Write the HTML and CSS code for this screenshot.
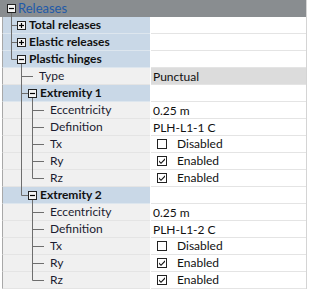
FILE: index.html
```html
<!DOCTYPE html>
<html>
<head>
<meta charset="utf-8">
<link rel="stylesheet" href="styles.css">
</head>
<body>
<div class="grid">
  <div class="row head">
    <svg class="tree" width="18" height="17" viewBox="0 0 18 17">
      <line x1="11.5" y1="12" x2="11.5" y2="17" class="ln"/>
      <rect x="7.5" y="4.5" width="8" height="8" class="bx"/>
      <line x1="9" y1="8.5" x2="14" y2="8.5" class="sg"/>
    </svg>
    <span class="title">Releases</span>
  </div>

  <div class="row cat">
    <div class="name">
      <svg class="tree" width="26" height="17" viewBox="3 0 26 17">
        <line x1="11.5" y1="0" x2="11.5" y2="17" class="ln"/>
        <line x1="11.5" y1="8.5" x2="17.5" y2="8.5" class="ln"/>
        <rect x="17.5" y="4.5" width="8" height="8" class="bx"/>
        <line x1="19" y1="8.5" x2="24" y2="8.5" class="sg"/>
        <line x1="21.5" y1="6" x2="21.5" y2="11" class="sg"/>
      </svg>
      <span class="lbl b">Total releases</span>
    </div>
    <div class="val"></div>
  </div>

  <div class="row cat">
    <div class="name">
      <svg class="tree" width="26" height="17" viewBox="3 0 26 17">
        <line x1="11.5" y1="0" x2="11.5" y2="17" class="ln"/>
        <line x1="11.5" y1="8.5" x2="17.5" y2="8.5" class="ln"/>
        <rect x="17.5" y="4.5" width="8" height="8" class="bx"/>
        <line x1="19" y1="8.5" x2="24" y2="8.5" class="sg"/>
        <line x1="21.5" y1="6" x2="21.5" y2="11" class="sg"/>
      </svg>
      <span class="lbl b">Elastic releases</span>
    </div>
    <div class="val"></div>
  </div>

  <div class="row cat">
    <div class="name">
      <svg class="tree" width="26" height="17" viewBox="3 0 26 17">
        <line x1="11.5" y1="0" x2="11.5" y2="8.5" class="ln"/>
        <line x1="11.5" y1="8.5" x2="17.5" y2="8.5" class="ln"/>
        <line x1="21.5" y1="12" x2="21.5" y2="17" class="ln"/>
        <rect x="17.5" y="4.5" width="8" height="8" class="bx"/>
        <line x1="19" y1="8.5" x2="24" y2="8.5" class="sg"/>
      </svg>
      <span class="lbl b">Plastic hinges</span>
    </div>
    <div class="val"></div>
  </div>

  <div class="row prop">
    <div class="name">
      <svg class="tree" width="36" height="17" viewBox="3 0 36 17">
        <line x1="21.5" y1="0" x2="21.5" y2="17" class="ln"/>
        <line x1="21.5" y1="8.5" x2="33" y2="8.5" class="ln"/>
      </svg>
      <span class="lbl">Type</span>
    </div>
    <div class="val sel">Punctual</div>
  </div>

  <div class="row cat">
    <div class="name">
      <svg class="tree" width="37" height="17" viewBox="3 0 37 17">
        <line x1="21.5" y1="0" x2="21.5" y2="17" class="ln"/>
        <line x1="21.5" y1="8.5" x2="28.5" y2="8.5" class="ln"/>
        <line x1="32.5" y1="12" x2="32.5" y2="17" class="ln"/>
        <rect x="28.5" y="4.5" width="8" height="8" class="bx"/>
        <line x1="30" y1="8.5" x2="35" y2="8.5" class="sg"/>
      </svg>
      <span class="lbl b">Extremity 1</span>
    </div>
    <div class="val"></div>
  </div>

  <div class="row prop">
    <div class="name">
      <svg class="tree" width="47" height="17" viewBox="3 0 47 17">
        <line x1="21.5" y1="0" x2="21.5" y2="17" class="ln"/>
        <line x1="32.5" y1="0" x2="32.5" y2="17" class="ln"/>
        <line x1="32.5" y1="8.5" x2="44" y2="8.5" class="ln"/>
      </svg>
      <span class="lbl">Eccentricity</span>
    </div>
    <div class="val">0.25 m</div>
  </div>

  <div class="row prop">
    <div class="name">
      <svg class="tree" width="47" height="17" viewBox="3 0 47 17">
        <line x1="21.5" y1="0" x2="21.5" y2="17" class="ln"/>
        <line x1="32.5" y1="0" x2="32.5" y2="17" class="ln"/>
        <line x1="32.5" y1="8.5" x2="44" y2="8.5" class="ln"/>
      </svg>
      <span class="lbl">Definition</span>
    </div>
    <div class="val">PLH-L1-1 C</div>
  </div>

  <div class="row prop">
    <div class="name">
      <svg class="tree" width="47" height="17" viewBox="3 0 47 17">
        <line x1="21.5" y1="0" x2="21.5" y2="17" class="ln"/>
        <line x1="32.5" y1="0" x2="32.5" y2="17" class="ln"/>
        <line x1="32.5" y1="8.5" x2="44" y2="8.5" class="ln"/>
      </svg>
      <span class="lbl">Tx</span>
    </div>
    <div class="val"><span class="cb"></span><span class="cbl">Disabled</span></div>
  </div>

  <div class="row prop">
    <div class="name">
      <svg class="tree" width="47" height="17" viewBox="3 0 47 17">
        <line x1="21.5" y1="0" x2="21.5" y2="17" class="ln"/>
        <line x1="32.5" y1="0" x2="32.5" y2="17" class="ln"/>
        <line x1="32.5" y1="8.5" x2="44" y2="8.5" class="ln"/>
      </svg>
      <span class="lbl">Ry</span>
    </div>
    <div class="val"><span class="cb on"><svg width="8" height="8" viewBox="0 0 8 8"><path d="M1 3.5 L3 5.5 L7 1.2 L7 3 L3 7 L1 5 Z" fill="#111"/></svg></span><span class="cbl">Enabled</span></div>
  </div>

  <div class="row prop">
    <div class="name">
      <svg class="tree" width="47" height="17" viewBox="3 0 47 17">
        <line x1="21.5" y1="0" x2="21.5" y2="17" class="ln"/>
        <line x1="32.5" y1="0" x2="32.5" y2="8.5" class="ln"/>
        <line x1="32.5" y1="8.5" x2="44" y2="8.5" class="ln"/>
      </svg>
      <span class="lbl">Rz</span>
    </div>
    <div class="val"><span class="cb on"><svg width="8" height="8" viewBox="0 0 8 8"><path d="M1 3.5 L3 5.5 L7 1.2 L7 3 L3 7 L1 5 Z" fill="#111"/></svg></span><span class="cbl">Enabled</span></div>
  </div>

  <div class="row cat">
    <div class="name">
      <svg class="tree" width="37" height="17" viewBox="3 0 37 17">
        <line x1="21.5" y1="0" x2="21.5" y2="8.5" class="ln"/>
        <line x1="21.5" y1="8.5" x2="28.5" y2="8.5" class="ln"/>
        <line x1="32.5" y1="12" x2="32.5" y2="17" class="ln"/>
        <rect x="28.5" y="4.5" width="8" height="8" class="bx"/>
        <line x1="30" y1="8.5" x2="35" y2="8.5" class="sg"/>
      </svg>
      <span class="lbl b">Extremity 2</span>
    </div>
    <div class="val"></div>
  </div>

  <div class="row prop">
    <div class="name">
      <svg class="tree" width="47" height="17" viewBox="3 0 47 17">
        <line x1="32.5" y1="0" x2="32.5" y2="17" class="ln"/>
        <line x1="32.5" y1="8.5" x2="44" y2="8.5" class="ln"/>
      </svg>
      <span class="lbl">Eccentricity</span>
    </div>
    <div class="val">0.25 m</div>
  </div>

  <div class="row prop">
    <div class="name">
      <svg class="tree" width="47" height="17" viewBox="3 0 47 17">
        <line x1="32.5" y1="0" x2="32.5" y2="17" class="ln"/>
        <line x1="32.5" y1="8.5" x2="44" y2="8.5" class="ln"/>
      </svg>
      <span class="lbl">Definition</span>
    </div>
    <div class="val">PLH-L1-2 C</div>
  </div>

  <div class="row prop">
    <div class="name">
      <svg class="tree" width="47" height="17" viewBox="3 0 47 17">
        <line x1="32.5" y1="0" x2="32.5" y2="17" class="ln"/>
        <line x1="32.5" y1="8.5" x2="44" y2="8.5" class="ln"/>
      </svg>
      <span class="lbl">Tx</span>
    </div>
    <div class="val"><span class="cb"></span><span class="cbl">Disabled</span></div>
  </div>

  <div class="row prop">
    <div class="name">
      <svg class="tree" width="47" height="17" viewBox="3 0 47 17">
        <line x1="32.5" y1="0" x2="32.5" y2="17" class="ln"/>
        <line x1="32.5" y1="8.5" x2="44" y2="8.5" class="ln"/>
      </svg>
      <span class="lbl">Ry</span>
    </div>
    <div class="val"><span class="cb on"><svg width="8" height="8" viewBox="0 0 8 8"><path d="M1 3.5 L3 5.5 L7 1.2 L7 3 L3 7 L1 5 Z" fill="#111"/></svg></span><span class="cbl">Enabled</span></div>
  </div>

  <div class="row prop">
    <div class="name">
      <svg class="tree" width="47" height="17" viewBox="3 0 47 17">
        <line x1="32.5" y1="0" x2="32.5" y2="8.5" class="ln"/>
        <line x1="32.5" y1="8.5" x2="44" y2="8.5" class="ln"/>
      </svg>
      <span class="lbl">Rz</span>
    </div>
    <div class="val"><span class="cb on"><svg width="8" height="8" viewBox="0 0 8 8"><path d="M1 3.5 L3 5.5 L7 1.2 L7 3 L3 7 L1 5 Z" fill="#111"/></svg></span><span class="cbl">Enabled</span></div>
  </div>
</div>
</body>
</html>
```
FILE: styles.css
```css
html, body {
  margin: 0;
  padding: 0;
  background: #ffffff;
}
body {
  font-family: Lato, "Open Sans", sans-serif;
  font-size: 12px;
  color: #1c1c30;
}
.grid {
  width: 306px;
  height: 289px;
  border-right: 1px solid #d4d4d4;
  background: #ffffff;
  overflow: hidden;
}
.row {
  display: flex;
  height: 17px;
  align-items: stretch;
}
.head {
  background: #898d90;
  align-items: center;
}
.title {
  color: #1f5aa8;
  font-size: 13px;
  line-height: 17px;
}
.tree {
  display: block;
  flex: none;
}
.ln {
  stroke: #6e6e6e;
  stroke-width: 1;
}
.bx {
  fill: #f4f4f4;
  stroke: #222;
  stroke-width: 1;
}
.sg {
  stroke: #000;
  stroke-width: 1.2;
}
.name {
  width: 148px;
  flex: none;
  display: flex;
  align-items: center;
  border-left: 1px solid #a8a8a8;
  margin-left: 2px;
  border-bottom: 1px solid #e4e4e4;
  box-sizing: border-box;
}
.cat .name {
  background: #c9d8e7;
  border-bottom-color: #dde6ee;
}
.prop .name {
  background: #f0f0f0;
}
.lbl {
  line-height: 16px;
  white-space: nowrap;
}
.b {
  font-weight: 700;
  color: #111;
}
.val {
  flex: 1;
  display: flex;
  align-items: center;
  margin-left: 1px;
  padding-left: 2px;
  border-bottom: 1px solid #e4e4e4;
  box-sizing: border-box;
  color: #111;
  white-space: nowrap;
}
.val.sel {
  background: #dcdcdc;
}
.cb {
  width: 10px;
  height: 10px;
  box-sizing: border-box;
  border: 1px solid #222;
  background: #fff;
  margin-left: 4px;
  margin-right: 10px;
  display: flex;
  align-items: center;
  justify-content: center;
}
.cb svg {
  display: block;
}
.cbl {
  line-height: 16px;
}
```
